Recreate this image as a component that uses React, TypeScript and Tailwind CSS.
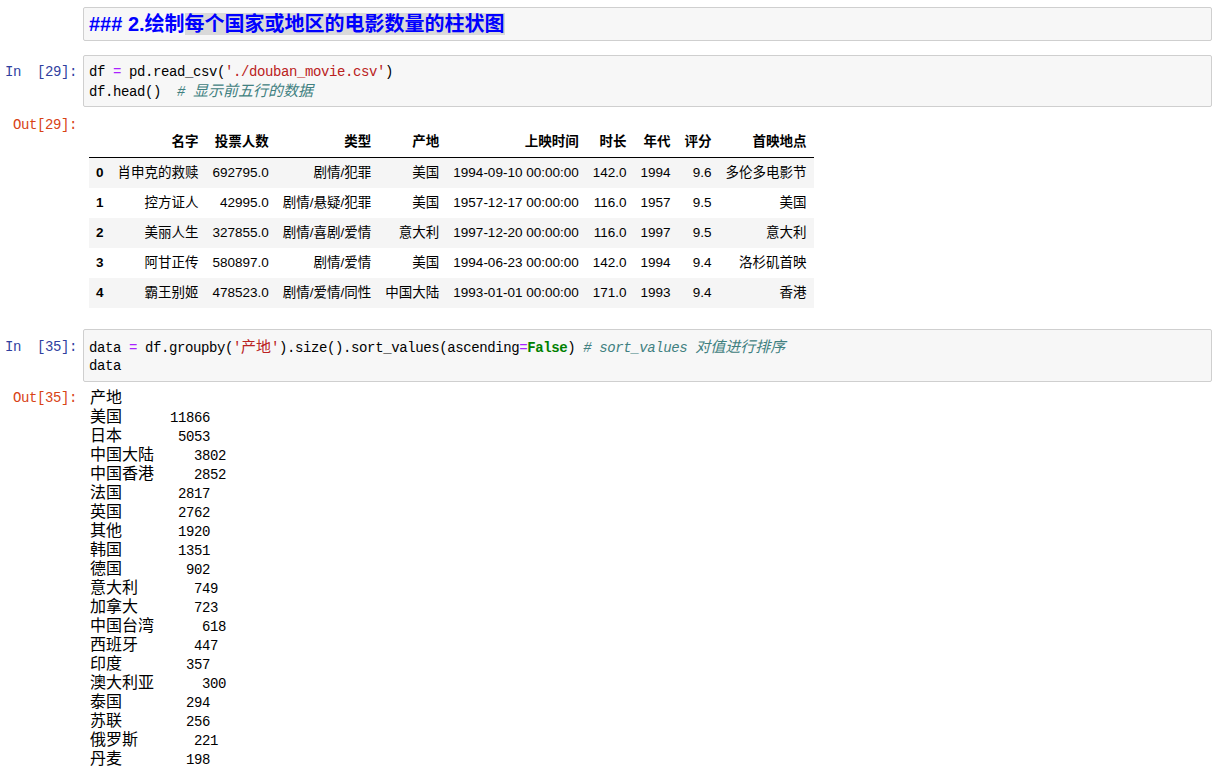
import { ReactNode } from 'react';

// Jupyter notebook: markdown cell, df.head() table and a groupby Series output

const MONO = "font-['Liberation_Mono',monospace] text-[14px] tracking-[-0.4px]";
const CJK = "font-['Noto_Sans_CJK_SC',sans-serif] tracking-normal leading-none";

const headers = ['', '名字', '投票人数', '类型', '产地', '上映时间', '时长', '年代', '评分', '首映地点'];

const rows = [
  ['0', '肖申克的救赎', '692795.0', '剧情/犯罪', '美国', '1994-09-10 00:00:00', '142.0', '1994', '9.6', '多伦多电影节'],
  ['1', '控方证人', '42995.0', '剧情/悬疑/犯罪', '美国', '1957-12-17 00:00:00', '116.0', '1957', '9.5', '美国'],
  ['2', '美丽人生', '327855.0', '剧情/喜剧/爱情', '意大利', '1997-12-20 00:00:00', '116.0', '1997', '9.5', '意大利'],
  ['3', '阿甘正传', '580897.0', '剧情/爱情', '美国', '1994-06-23 00:00:00', '142.0', '1994', '9.4', '洛杉矶首映'],
  ['4', '霸王别姬', '478523.0', '剧情/爱情/同性', '中国大陆', '1993-01-01 00:00:00', '171.0', '1993', '9.4', '香港'],
];

const counts: [string, number][] = [
  ['美国', 11866],
  ['日本', 5053],
  ['中国大陆', 3802],
  ['中国香港', 2852],
  ['法国', 2817],
  ['英国', 2762],
  ['其他', 1920],
  ['韩国', 1351],
  ['德国', 902],
  ['意大利', 749],
  ['加拿大', 723],
  ['中国台湾', 618],
  ['西班牙', 447],
  ['印度', 357],
  ['澳大利亚', 300],
  ['泰国', 294],
  ['苏联', 256],
  ['俄罗斯', 221],
  ['丹麦', 198],
];

// CJK inside code is double width (16px) like the ASCII cells are 8px
const Wide = ({ children }: { children: ReactNode }) => (
  <span className={`${CJK} text-[15px] tracking-[1px]`}>{children}</span>
);

const Op = ({ children }: { children: ReactNode }) => <span className="text-[#aa22ff]">{children}</span>;
const Str = ({ children }: { children: ReactNode }) => <span className="text-[#ba2121]">{children}</span>;
const Comment = ({ children }: { children: ReactNode }) => (
  <span className="italic text-[#408080]">{children}</span>
);

const Line = ({ children }: { children: ReactNode }) => (
  <div className="h-[19px] leading-[19px] whitespace-pre">{children}</div>
);

const Prompt = ({ label, out }: { label: string; out?: boolean }) => (
  <div
    className={`w-[83px] shrink-0 pr-[6px] text-right leading-[19px] whitespace-pre ${MONO} ${
      out ? 'text-[#d84315]' : 'text-[#303f9f]'
    }`}
  >
    {label}
  </div>
);

const CodeCell = ({
  n,
  pt,
  promptPt,
  children,
}: {
  n: number;
  pt: string;
  promptPt: string;
  children: ReactNode;
}) => (
  <div className="flex">
    <div className={promptPt}>
      <Prompt label={`In  [${n}]:`} />
    </div>
    <div
      className={`flex-1 rounded-[2px] border border-[#cfcfcf] bg-[#f7f7f7] pl-[5px] pb-[5px] text-black ${pt} ${MONO}`}
    >
      {children}
    </div>
  </div>
);

export default function App() {
  return (
    <div className="min-h-[768px] w-[1213px] overflow-hidden bg-white pr-[1px] pt-[7px] text-black">
      {/* markdown cell in edit mode */}
      <div className="flex">
        <div className="w-[83px] shrink-0" />
        <div className="h-[34px] flex-1 rounded-[2px] border border-[#cfcfcf] bg-[#f7f7f7] pl-[5px] pt-[4px]">
          <div className="whitespace-pre font-['Liberation_Sans','Noto_Sans_CJK_SC',sans-serif] text-[20px] font-bold leading-[24px] text-[#0000ff]">
            ### 2.绘制<span className="bg-[#d9d9d9]">每个国家或地区的电影数量的柱状图</span>
          </div>
        </div>
      </div>

      {/* In [29] */}
      <div className="mt-[14px]">
        <CodeCell n={29} pt="pt-[7px]" promptPt="pt-[8px]">
          <Line>
            df <Op>=</Op> pd.read_csv(<Str>'./douban_movie.csv'</Str>)
          </Line>
          <Line>
            df.head(){'  '}
            <Comment>
              # <Wide>显示前五行的数据</Wide>
            </Comment>
          </Line>
        </CodeCell>
      </div>

      {/* Out [29] */}
      <div className="mt-[7px] flex">
        <div className="pt-[2px]">
          <Prompt label="Out[29]:" out />
        </div>
        <div className="pl-[6px] pt-[13px]">
          <table className="font-['Liberation_Sans','Noto_Sans_CJK_SC',sans-serif] text-[13.5px] leading-[16px] text-black">
            <thead>
              <tr>
                {headers.map((h, i) => (
                  <th
                    key={i}
                    className="border-b border-black px-[7px] py-[7px] text-right align-bottom font-bold whitespace-nowrap"
                  >
                    {h}
                  </th>
                ))}
              </tr>
            </thead>
            <tbody>
              {rows.map((r) => (
                <tr key={r[0]} className="odd:bg-[#f5f5f5]">
                  {r.map((c, i) =>
                    i === 0 ? (
                      <th key={i} className="px-[7px] py-[7px] text-right font-bold">
                        {c}
                      </th>
                    ) : (
                      <td key={i} className="px-[7px] py-[7px] text-right whitespace-nowrap">
                        {c}
                      </td>
                    ),
                  )}
                </tr>
              ))}
            </tbody>
          </table>
        </div>
      </div>

      {/* In [35] */}
      <div className="mt-[21px]">
        <CodeCell n={35} pt="pt-[8px]" promptPt="pt-[9px]">
          <Line>
            data <Op>=</Op> df.groupby(
            <Str>
              '<Wide>产地</Wide>'
            </Str>
            ).size().sort_values(ascending<Op>=</Op>
            <span className="font-bold text-[#008000]">False</span>){' '}
            <Comment>
              # sort_values <Wide>对值进行排序</Wide>
            </Comment>
          </Line>
          <Line>data</Line>
        </CodeCell>
      </div>

      {/* Out [35] */}
      <div className="mt-[6px] flex">
        <div className="pt-[1px]">
          <Prompt label="Out[35]:" out />
        </div>
        <div className={`pl-[7px] ${MONO}`}>
          <Line>
            <span className={`${CJK} text-[16px]`}>产地</span>
          </Line>
          {counts.map(([name, v]) => (
            <Line key={name}>
              <span className={`${CJK} text-[16px]`}>{name}</span>
              {' '.repeat(4 - name.length) + '    ' + String(v).padStart(5)}
            </Line>
          ))}
        </div>
      </div>
    </div>
  );
}
